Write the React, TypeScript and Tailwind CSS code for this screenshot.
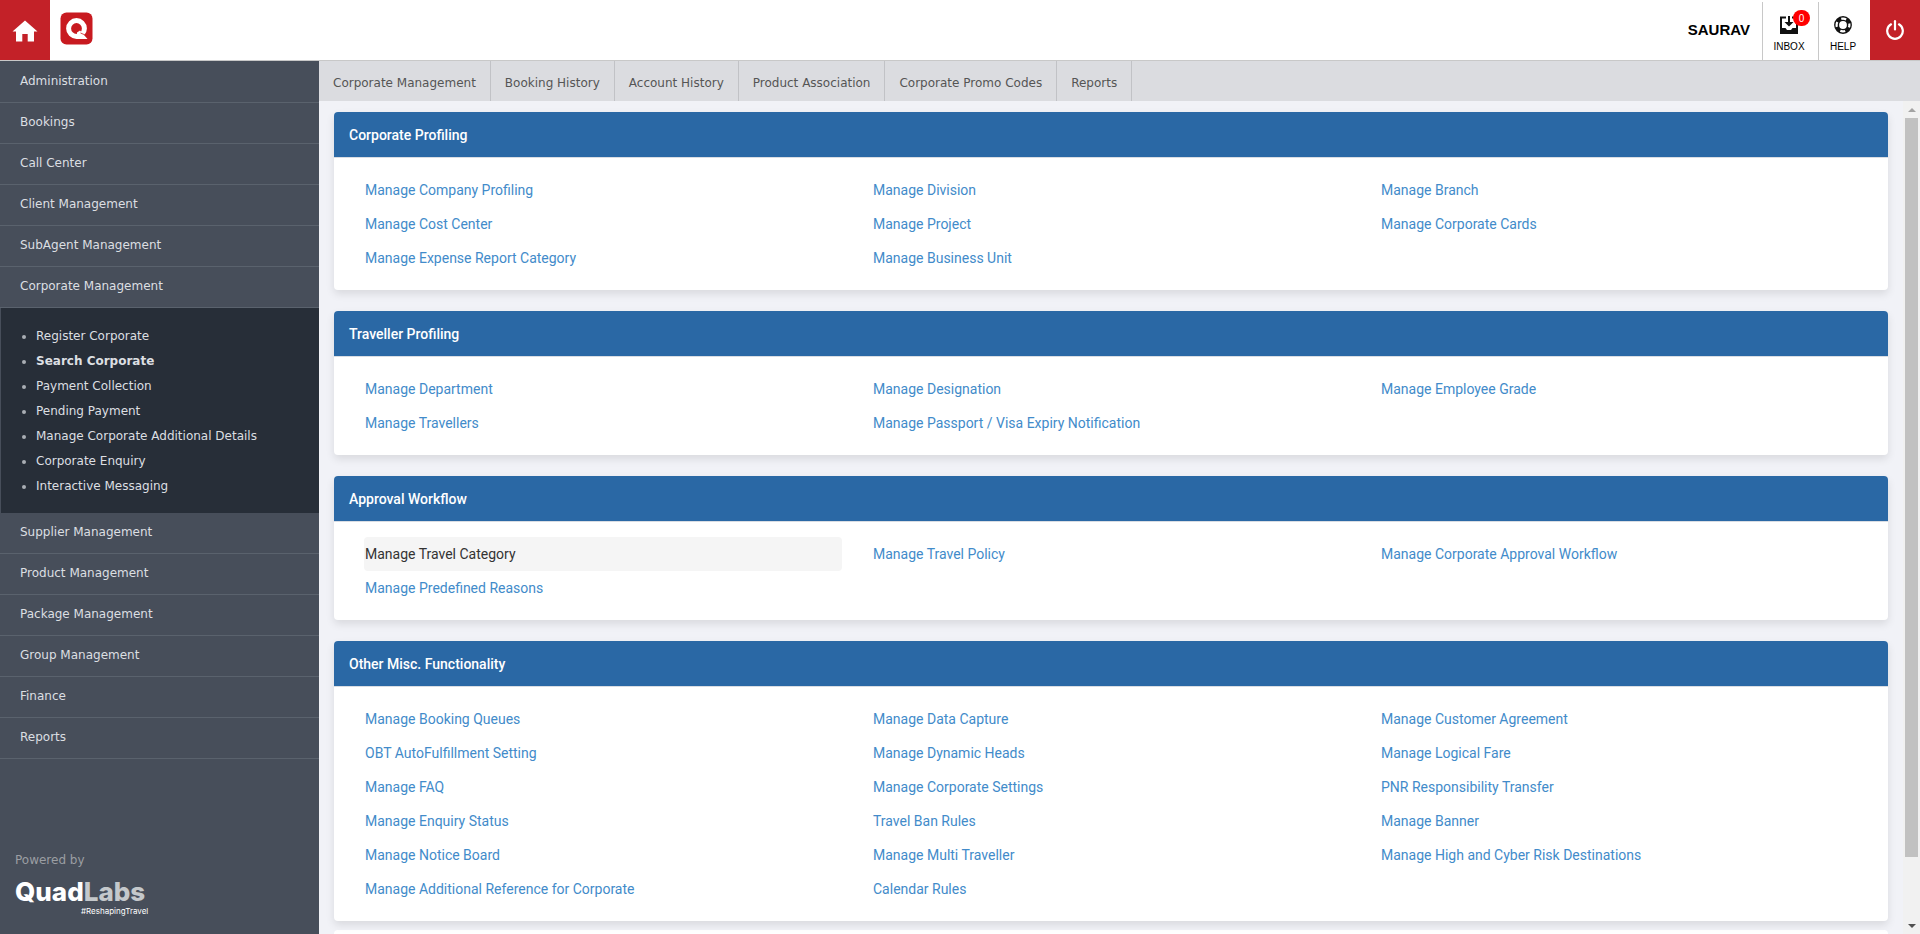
import React from "react";

const before = ["Administration", "Bookings", "Call Center", "Client Management", "SubAgent Management", "Corporate Management"];
const submenu = [
  "Register Corporate",
  "Search Corporate",
  "Payment Collection",
  "Pending Payment",
  "Manage Corporate Additional Details",
  "Corporate Enquiry",
  "Interactive Messaging",
];
const after = ["Supplier Management", "Product Management", "Package Management", "Group Management", "Finance", "Reports"];
const tabs = ["Corporate Management", "Booking History", "Account History", "Product Association", "Corporate Promo Codes", "Reports"];

const cards = [
  {
    title: "Corporate Profiling",
    links: [
      "Manage Company Profiling", "Manage Division", "Manage Branch",
      "Manage Cost Center", "Manage Project", "Manage Corporate Cards",
      "Manage Expense Report Category", "Manage Business Unit",
    ],
  },
  {
    title: "Traveller Profiling",
    links: [
      "Manage Department", "Manage Designation", "Manage Employee Grade",
      "Manage Travellers", "Manage Passport / Visa Expiry Notification",
    ],
  },
  {
    title: "Approval Workflow",
    links: [
      "Manage Travel Category", "Manage Travel Policy", "Manage Corporate Approval Workflow",
      "Manage Predefined Reasons",
    ],
  },
  {
    title: "Other Misc. Functionality",
    links: [
      "Manage Booking Queues", "Manage Data Capture", "Manage Customer Agreement",
      "OBT AutoFulfillment Setting", "Manage Dynamic Heads", "Manage Logical Fare",
      "Manage FAQ", "Manage Corporate Settings", "PNR Responsibility Transfer",
      "Manage Enquiry Status", "Travel Ban Rules", "Manage Banner",
      "Manage Notice Board", "Manage Multi Traveller", "Manage High and Cyber Risk Destinations",
      "Manage Additional Reference for Corporate", "Calendar Rules",
    ],
  },
];
const active = "Manage Travel Category";

function NavItem({ label }: { label: string }) {
  return (
    <li className="border-b border-[#5a626d]">
      <a href="#" className="flex h-10 items-center pb-[3px] pl-5">{label}</a>
    </li>
  );
}

function Header() {
  return (
    <header className="flex h-[61px] shrink-0 border-b border-[#c8c8c8] bg-white">
      <a href="#" aria-label="Home" className="flex w-[50px] items-center justify-center bg-[#c32128] pt-[2px] text-white">
        <svg viewBox="0 0 26 22" className="h-[22px] w-[26px]" fill="currentColor">
          <path d="M13 0.5 25.5 11.5H22V21.5H15.7V14H10.3V21.5H4V11.5H0.5Z" />
        </svg>
      </a>
      <a href="#" aria-label="Quad" className="ml-[10px] flex items-start pt-3">
        <svg viewBox="0 0 33 33" className="h-[33px] w-[33px]">
          <rect x="0.5" y="0.5" width="32" height="32" rx="6" fill="#c81a20" />
          <circle cx="16.5" cy="16.5" r="7.900" fill="none" stroke="#fff" strokeWidth="5" />
          <path d="M17 20.500 20 18.500 27.500 27H16.500Z" fill="#fff" />
          <path d="M20.500 21 27.500 24" stroke="#c81a20" strokeWidth="0.800" />
        </svg>
      </a>
      <div className="ml-auto flex font-['Liberation_Sans',Arial,sans-serif] text-black">
        <span className="flex items-center pr-3 text-[15px] font-bold">SAURAV</span>
        <a href="#" className="relative mt-[2px] flex w-14 flex-col items-center border-l border-[#c8c8c8] pt-[14px] pr-[3px] text-[10px]">
          <svg viewBox="0 0 18 18" className="h-[18px] w-[18px]">
            <path d="M6 1.500H1V17H17V1.500H12" fill="none" stroke="#111" strokeWidth="2" />
            <path d="M1 12H5.500L7 14H11L12.500 12H17V17H1Z" fill="#111" />
            <path d="M8 0h2v6h3.500L9 10.500 4.500 6H8Z" fill="#111" />
          </svg>
          <span className="mt-[7px] leading-3">INBOX</span>
          <span className="absolute top-2 left-[30px] flex h-4 w-[17px] items-center justify-center rounded-full bg-[#f00] text-[10px] text-white">0</span>
        </a>
        <a href="#" className="mt-[2px] flex w-[52px] flex-col items-center border-l border-[#c8c8c8] pt-[14px] pr-[3px] text-[10px]">
          <svg viewBox="0 0 18 18" className="h-[18px] w-[18px]" fill="none">
            <circle cx="9" cy="9" r="6.400" stroke="#111" strokeWidth="5" />
            <circle cx="9" cy="9" r="6.400" stroke="#fff" strokeWidth="2.200" strokeDasharray="5.100 4.953" strokeDashoffset="2.550" />
          </svg>
          <span className="mt-[7px] leading-3">HELP</span>
        </a>
        <button aria-label="Log out" className="flex w-[50px] items-center justify-center bg-[#c32128] text-white">
          <svg viewBox="0 0 18 20" className="h-5 w-[18px]" fill="none" stroke="currentColor" strokeWidth="2.200" strokeLinecap="round">
            <path d="M9 1.200V9.500" />
            <path d="M5 4.300A7.800 7.800 0 1 0 13 4.300" />
          </svg>
        </button>
      </div>
    </header>
  );
}

function Sidebar() {
  return (
    <aside className="flex w-[319px] shrink-0 flex-col bg-[#474e5a] pt-px font-['DejaVu_Sans',Verdana,sans-serif] text-xs text-[#dcdfe2]">
      <ul>
        {before.map((label) => <NavItem key={label} label={label} />)}
        <li className="border-l border-[#474e5a]">
          <ul className="bg-[#272e38] py-[15px]">
            {submenu.map((label) => (
              <li key={label} className="flex h-[25px] items-center gap-[10px] pl-[21px]">
                <span className="mt-[3px] size-1 rounded-full bg-[#a9aeb4]" />
                <a href="#" className={label === "Search Corporate" ? "font-bold" : ""}>{label}</a>
              </li>
            ))}
          </ul>
        </li>
        {after.map((label) => <NavItem key={label} label={label} />)}
      </ul>
      <footer className="mt-auto flex flex-col items-start pb-[18px] pl-[15px]">
        <span className="leading-5 text-[#9b9ea3]">Powered by</span>
        <span className="mt-2 font-['Inter',sans-serif] text-[26px] leading-7 font-extrabold text-white">
          Quad<span className="text-[#c4c8cb]">Labs</span>
        </span>
        <span className="pl-[66px] font-['Inter',sans-serif] text-[8px] leading-[10px] text-white">#ReshapingTravel</span>
      </footer>
    </aside>
  );
}

function Scrollbar() {
  return (
    <div aria-hidden="true" className="flex w-[17px] shrink-0 flex-col items-center bg-[#f1f1f1]">
      <div className="flex h-[17px] items-center">
        <svg viewBox="0 0 8 4" className="h-1 w-2" fill="#a3a3a3"><path d="M0 4 4 0 8 4Z" /></svg>
      </div>
      <div className="w-[13px] grow-[739] bg-[#c1c1c1]" />
      <div className="grow-[60]" />
      <div className="flex h-[17px] items-center">
        <svg viewBox="0 0 8 4" className="h-1 w-2" fill="#505050"><path d="M0 0 4 4 8 0Z" /></svg>
      </div>
    </div>
  );
}

export default function App() {
  return (
    <div className="flex h-screen flex-col overflow-hidden bg-[#f1f2f7]">
      <Header />
      <div className="flex min-h-0 grow">
        <Sidebar />
        <div className="flex min-w-0 grow flex-col">
          <nav className="flex h-10 shrink-0 bg-[#dbdce0] font-['DejaVu_Sans',Verdana,sans-serif] text-xs text-[#555]">
            {tabs.map((tab) => (
              <a key={tab} href="#" className="flex items-center border-r border-[#c1c2c6] px-[14px] pt-[3px]">{tab}</a>
            ))}
          </nav>
          <div className="flex min-h-0 grow">
            <main className="min-w-0 grow overflow-hidden px-[15px] pt-[11px] font-['Roboto',sans-serif] text-sm">
              <div className="flex flex-col gap-[21px]">
                {cards.map((card) => (
                  <section key={card.title} className="rounded-[4px] bg-white shadow-[0_4px_8px_rgba(0,0,0,0.1)]">
                    <h2 className="flex h-[46px] items-center rounded-t-[4px] border-b border-[#d9dde3] bg-[#2a68a5] px-[15px] font-medium text-white">{card.title}</h2>
                    <ul className="grid grid-cols-3 gap-x-[30px] px-[30px] py-[15px]">
                      {card.links.map((link) => (
                        <li key={link}>
                          <a
                            href="#"
                            className={
                              link === active
                                ? "flex h-[34px] items-center rounded-[4px] bg-[#f5f5f5] pl-px text-[#333]"
                                : "flex h-[34px] items-center pl-px text-[#428bca]"
                            }
                          >
                            {link}
                          </a>
                        </li>
                      ))}
                    </ul>
                  </section>
                ))}
              </div>
              <section className="mt-[9px] h-10 rounded-[4px] bg-white" />
            </main>
            <Scrollbar />
          </div>
        </div>
      </div>
    </div>
  );
}
